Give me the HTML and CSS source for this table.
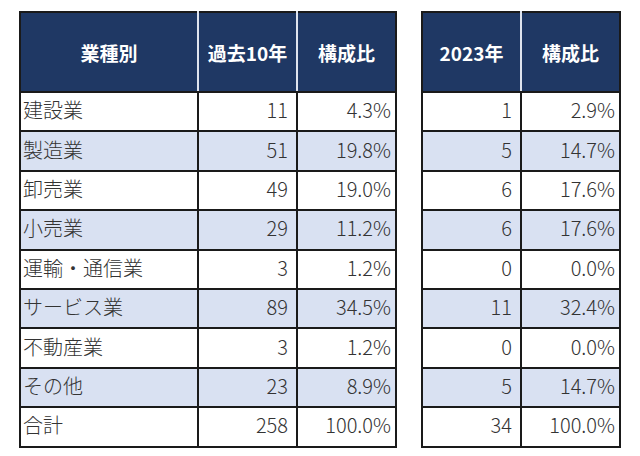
FILE: index.html
```html
<!DOCTYPE html>
<html lang="ja">
<head>
<meta charset="utf-8">
<link rel="stylesheet" href="styles.css">
</head>
<body>
<div class="wrap">
  <table class="tbl tbl-main">
    <colgroup><col class="c-name"><col class="c-num"><col class="c-num"></colgroup>
    <thead>
      <tr><th>業種別</th><th>過去10年</th><th>構成比</th></tr>
    </thead>
    <tbody>
      <tr><td class="name">建設業</td><td class="num">11</td><td class="pct">4.3%</td></tr>
      <tr class="alt"><td class="name">製造業</td><td class="num">51</td><td class="pct">19.8%</td></tr>
      <tr><td class="name">卸売業</td><td class="num">49</td><td class="pct">19.0%</td></tr>
      <tr class="alt"><td class="name">小売業</td><td class="num">29</td><td class="pct">11.2%</td></tr>
      <tr><td class="name">運輸・通信業</td><td class="num">3</td><td class="pct">1.2%</td></tr>
      <tr class="alt"><td class="name">サービス業</td><td class="num">89</td><td class="pct">34.5%</td></tr>
      <tr><td class="name">不動産業</td><td class="num">3</td><td class="pct">1.2%</td></tr>
      <tr class="alt"><td class="name">その他</td><td class="num">23</td><td class="pct">8.9%</td></tr>
      <tr><td class="name">合計</td><td class="num">258</td><td class="pct">100.0%</td></tr>
    </tbody>
  </table>
  <table class="tbl tbl-year">
    <colgroup><col class="c-num"><col class="c-num"></colgroup>
    <thead>
      <tr><th>2023年</th><th>構成比</th></tr>
    </thead>
    <tbody>
      <tr><td class="num">1</td><td class="pct">2.9%</td></tr>
      <tr class="alt"><td class="num">5</td><td class="pct">14.7%</td></tr>
      <tr><td class="num">6</td><td class="pct">17.6%</td></tr>
      <tr class="alt"><td class="num">6</td><td class="pct">17.6%</td></tr>
      <tr><td class="num">0</td><td class="pct">0.0%</td></tr>
      <tr class="alt"><td class="num">11</td><td class="pct">32.4%</td></tr>
      <tr><td class="num">0</td><td class="pct">0.0%</td></tr>
      <tr class="alt"><td class="num">5</td><td class="pct">14.7%</td></tr>
      <tr><td class="num">34</td><td class="pct">100.0%</td></tr>
    </tbody>
  </table>
</div>
</body>
</html>
```

FILE: styles.css
```css
html, body {
  margin: 0;
  padding: 0;
  background: #ffffff;
}

body {
  font-family: "Noto Sans CJK JP", "Noto Sans", sans-serif;
  color: #333333;
}

.wrap {
  display: flex;
  align-items: flex-start;
  gap: 24px;
  padding: 11px 0 0 19px;
}

.tbl {
  border-collapse: collapse;
  table-layout: fixed;
  border: 2px solid #1a1a1a;
}

.tbl-main {
  width: 376px;
}

.tbl-year {
  width: 199px;
}

.c-name {
  width: 178px;
}

.c-num {
  width: 99px;
}

.tbl th {
  height: 78px;
  padding: 0;
  background: #1f3864;
  color: #ffffff;
  font-size: 19px;
  font-weight: 700;
  text-align: center;
  border-left: 2px solid #dfe4ee;
  border-bottom: 2px solid #1a1a1a;
}

.tbl th:first-child {
  border-left: 2px solid #1a1a1a;
}

.tbl td {
  height: 34.4px;
  padding: 0 0 3px 0;
  font-size: 20px;
  font-weight: 300;
  line-height: 1;
  border: 2px solid #1a1a1a;
  background: #ffffff;
  white-space: nowrap;
}

.tbl tr.alt td {
  background: #d9e1f2;
}

.tbl td.name {
  text-align: left;
  padding-left: 2px;
}

.tbl td.num {
  text-align: right;
  padding-right: 8px;
}

.tbl td.pct {
  text-align: right;
  padding-right: 4px;
}
```
